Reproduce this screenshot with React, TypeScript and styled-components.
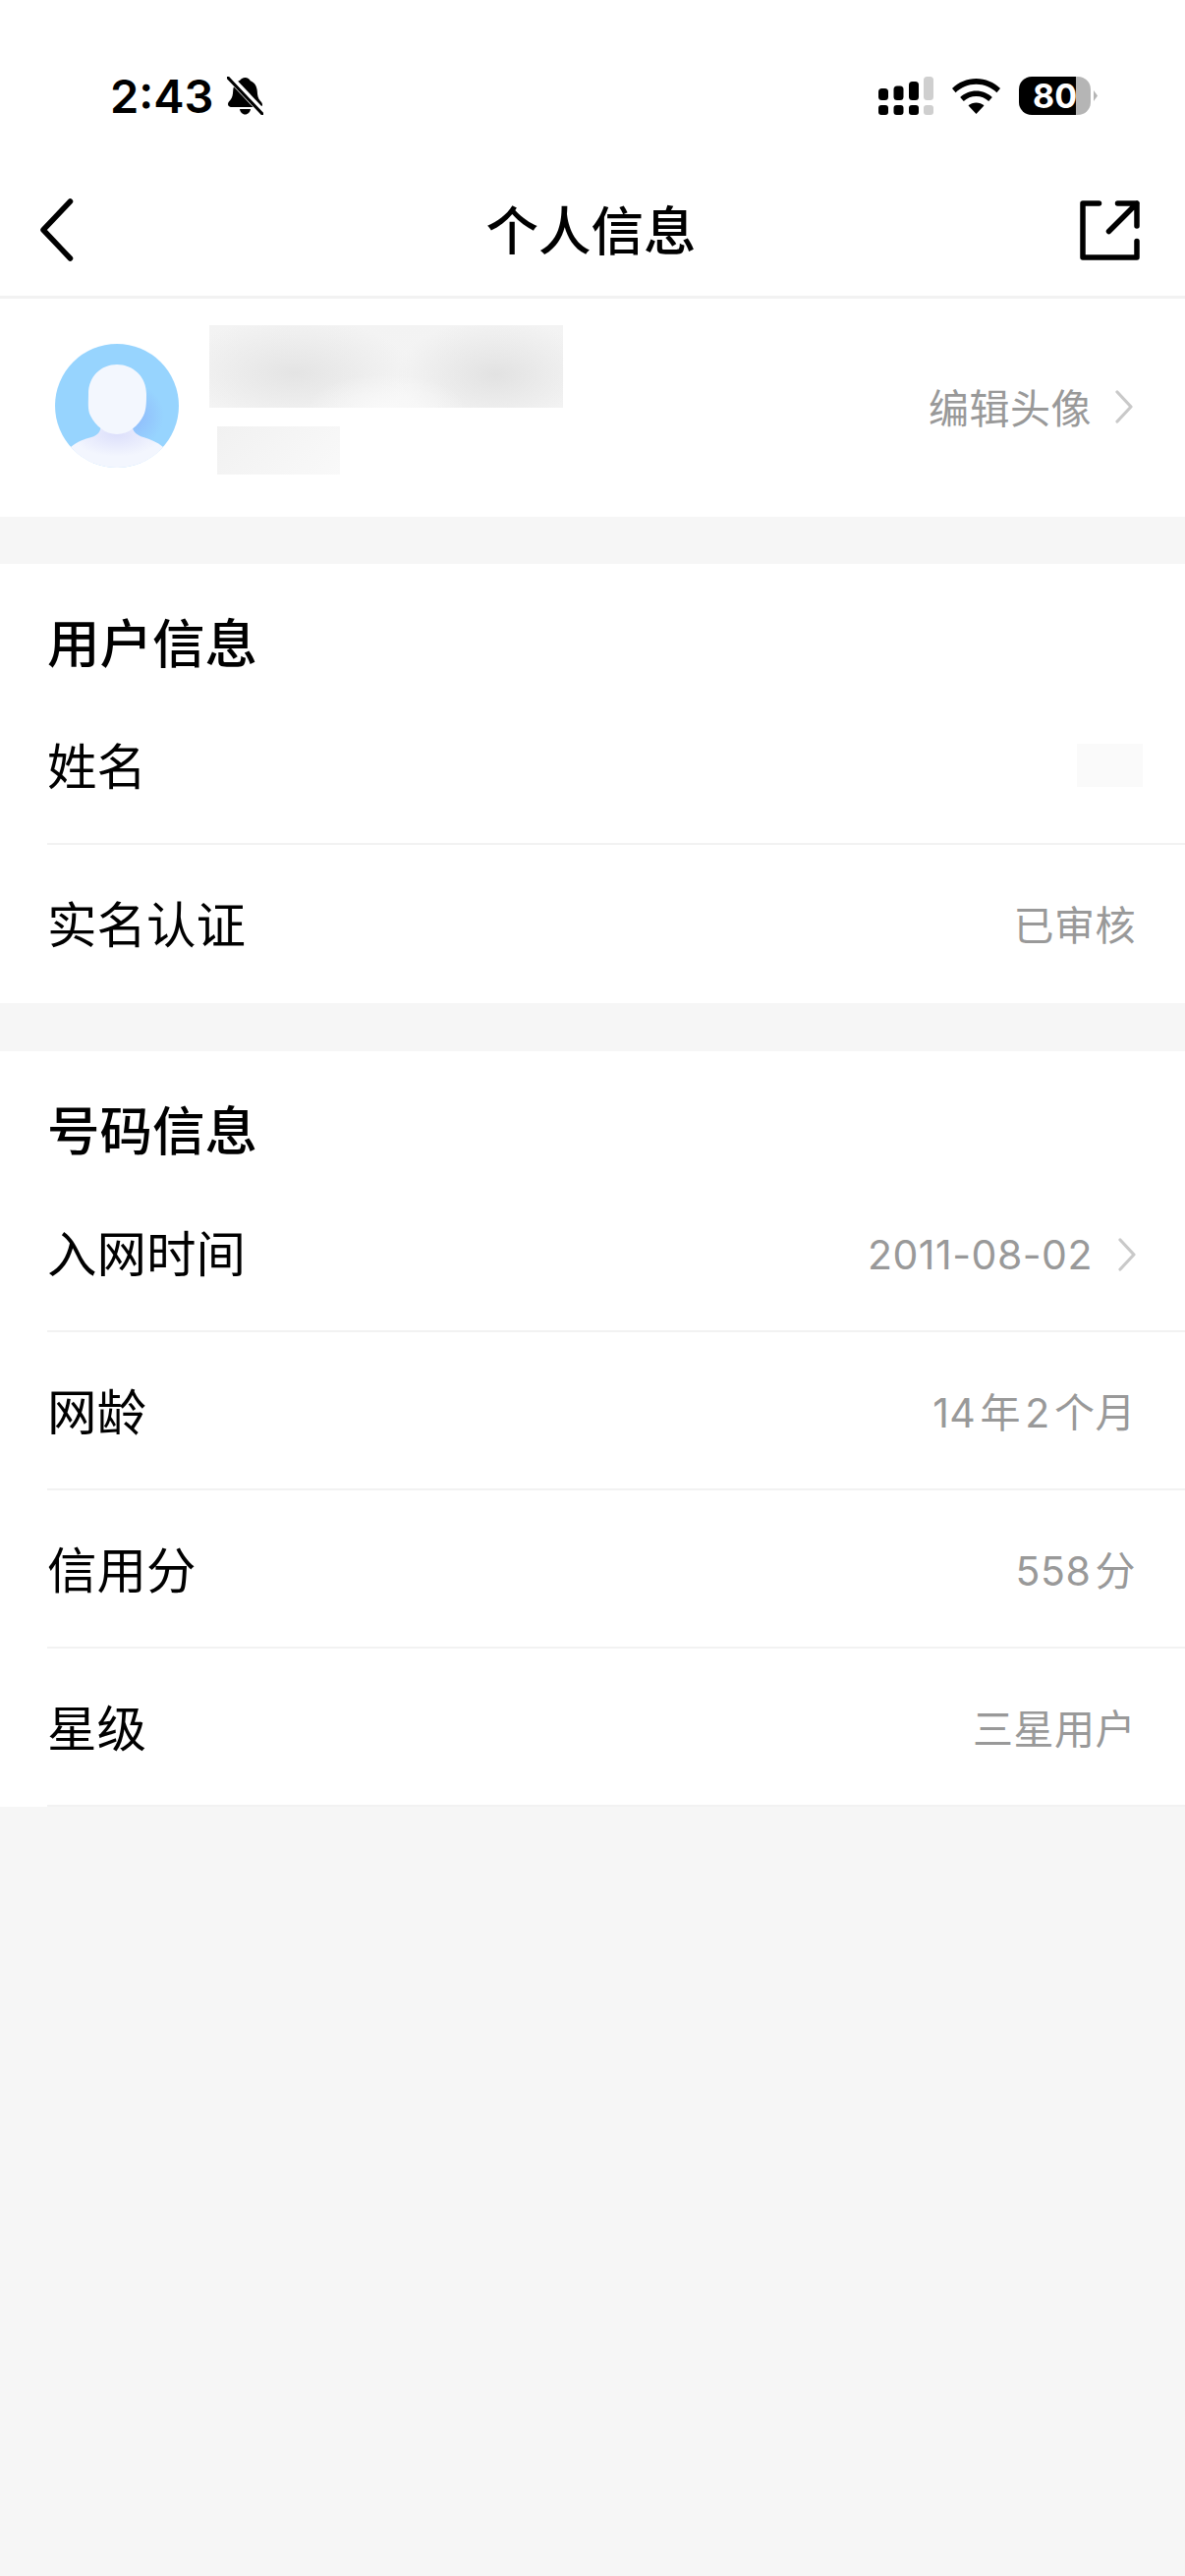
import styled, { createGlobalStyle } from 'styled-components';

const GlobalStyle = createGlobalStyle`
  html, body {
    margin: 0;
    padding: 0;
    background: #f6f6f6;
  }
  * {
    box-sizing: border-box;
  }
`;

const FONT = `Inter, "Noto Sans CJK SC", "Noto Sans", sans-serif`;

const Page = styled.div`
  width: 1206px;
  min-height: 2622px;
  background: #f6f6f6;
  font-family: ${FONT};
  color: #000;
`;

const Header = styled.header`
  background: #fff;
  border-bottom: 3px solid #f2f2f2;
`;

const StatusBar = styled.div`
  height: 167px;
  display: flex;
  align-items: flex-start;
  justify-content: space-between;
  padding: 78px 89px 0 112px;
`;

const StatusGroup = styled.div<{ $gap: number }>`
  display: flex;
  align-items: center;
  height: 39px;
  gap: ${(p) => p.$gap}px;
`;

const Time = styled.span`
  font-size: 47px;
  font-weight: 600;
  line-height: 39px;
  letter-spacing: 0;
`;

const Battery = styled.div`
  width: 73px;
  height: 39px;
  border-radius: 13px;
  overflow: hidden;
  background: linear-gradient(to right, #000 58px, #b5b5b5 58px);
  color: #fff;
  font-size: 34px;
  font-weight: 700;
  line-height: 40px;
  padding-left: 14px;
`;

const BatteryNub = styled.div`
  width: 4px;
  height: 11px;
  margin-left: -16px;
  background: #b5b5b5;
  clip-path: polygon(0 0, 100% 50%, 0 100%);
`;

const Nav = styled.nav`
  height: 134px;
  display: grid;
  grid-template-columns: 1fr auto 1fr;
  align-items: center;
  padding: 0 44px 0 41px;
`;

const NavTitle = styled.h1`
  margin: 0;
  padding-top: 3px;
  font-size: 53.5px;
  font-weight: 500;
  line-height: 72px;
`;

const NavEnd = styled.div`
  display: flex;
  justify-content: flex-end;
  padding-right: 2px;
`;

const ProfileCard = styled.section`
  height: 222px;
  background: #fff;
  display: flex;
  align-items: flex-start;
  padding: 27px 54px 0 56px;
`;

const Avatar = styled.svg`
  width: 126px;
  height: 126px;
  margin-top: 19px;
  flex: none;
`;

const ProfileText = styled.div`
  display: flex;
  flex-direction: column;
  gap: 19px;
  margin-left: 31px;
`;

const BlurName = styled.div`
  width: 360px;
  height: 84px;
  background:
    radial-gradient(ellipse 80px 34px at 50% 100%, #f9f9f9, rgba(249, 249, 249, 0)),
    radial-gradient(ellipse 120px 56px at 24% 58%, #e4e4e4, rgba(228, 228, 228, 0)),
    radial-gradient(ellipse 100px 56px at 81% 60%, #e2e2e2, rgba(226, 226, 226, 0)),
    linear-gradient(#f3f3f3, #f5f5f5);
`;

const BlurTag = styled.div`
  width: 125px;
  height: 49px;
  margin-left: 8px;
  background: linear-gradient(135deg, #f1f1f1, #f9f9f9);
`;

const BlurValue = styled.div`
  width: 67px;
  height: 44px;
  margin-right: -7px;
  background: #fafafa;
`;

const EditLink = styled.div`
  margin-left: auto;
  margin-right: -1px;
  align-self: center;
  margin-bottom: 30px;
  display: flex;
  align-items: center;
  gap: 24px;
`;

const Section = styled.section`
  background: #fff;
  margin-top: 48px;

  & + & {
    margin-top: 49px;
  }
`;

const SectionTitle = styled.h2`
  margin: 0;
  height: 125px;
  padding: 52px 0 0 48px;
  font-size: 53.5px;
  font-weight: 500;
  line-height: 60px;
`;

const Row = styled.div<{ $last?: boolean }>`
  height: 161px;
  margin-left: 48px;
  padding-right: 50px;
  display: flex;
  align-items: center;
  justify-content: space-between;
  border-bottom: 2px solid ${(p) => (p.$last ? 'transparent' : '#f2f2f2')};
`;

const Label = styled.span`
  padding-top: 5px;
  font-size: 50.5px;
  font-weight: 400;
  line-height: 60px;
`;

const Value = styled.span`
  display: flex;
  align-items: center;
  gap: 26px;
  padding-top: 4px;
  font-size: 41px;
  line-height: 56px;
  color: #999;
  letter-spacing: 0.5px;
`;

const Chevron = () => (
  <svg width="18" height="34" viewBox="0 0 18 34" fill="none">
    <path d="M2 2l14 15L2 32" stroke="#c9c9c9" strokeWidth="3.2" strokeLinecap="round" strokeLinejoin="round" />
  </svg>
);

const BellOff = () => (
  <svg width="37" height="39" viewBox="0 0 37 39">
    <path
      fill="#000"
      d="M18.5 1c2.6 0 4.4 1.500 5.300 3.300 4.400 1.600 6.700 5.700 7 10.700.2 3.800.7 7.200 2.900 9.500 1.400 1.500 2.300 2.800 2.300 4 0 1.500-1.100 2.500-2.800 2.500H3.800C2.100 30.500 1 29.500 1 28c0-1.200.9-2.500 2.300-4 2.200-2.300 2.700-5.700 2.900-9.500.3-5 2.600-9.100 7-10.700C14.100 2.500 15.900 1 18.500 1zM13 33h11c-.4 3.100-2.700 5.500-5.500 5.500S13.400 36.100 13 33z"
    />
    <path d="M1 -1L37 37" stroke="#fff" strokeWidth="7" />
    <path d="M1 1L36 38" stroke="#000" strokeWidth="3" strokeLinecap="round" />
  </svg>
);

const Signal = () => (
  <svg width="56" height="39" viewBox="0 0 56 39">
    <rect x="0" y="12" width="10" height="12" rx="3.500" fill="#000" />
    <rect x="15.500" y="9.500" width="10" height="14.500" rx="3.500" fill="#000" />
    <rect x="31" y="5" width="10" height="19" rx="3.500" fill="#000" />
    <rect x="46" y="0" width="10" height="24" rx="3.500" fill="#cfcfcf" />
    <rect x="0" y="29" width="10" height="10" rx="3" fill="#000" />
    <rect x="15.500" y="29" width="10" height="10" rx="3" fill="#000" />
    <rect x="31" y="29" width="10" height="10" rx="3" fill="#000" />
    <rect x="46" y="29" width="10" height="10" rx="3" fill="#cfcfcf" />
  </svg>
);

const Wifi = () => (
  <svg width="49" height="36" viewBox="0 0 49 36">
    <path
      fill="#000"
      d="M24.500 0C34 0 42.500 3.800 49 10l-3.600 4.200C39.900 9 32.600 5.800 24.500 5.800S9.100 9 3.600 14.200L0 10C6.500 3.800 15 0 24.500 0z"
    />
    <path
      fill="#000"
      d="M24.500 12.500c6.300 0 12 2.500 16.300 6.500l-3.600 4.100c-3.300-3.100-7.800-5-12.700-5s-9.400 1.900-12.700 5L8.200 19c4.300-4 10-6.500 16.300-6.500z"
    />
    <path
      fill="#000"
      d="M24.500 24.500c3.100 0 5.900 1.200 8 3.100L24.500 36l-8-8.400c2.100-1.900 4.900-3.100 8-3.100z"
    />
  </svg>
);

const Back = () => (
  <svg width="34" height="64" viewBox="0 0 34 64" fill="none">
    <path d="M30.500 3L3 32l27.500 29" stroke="#000" strokeWidth="5.500" strokeLinecap="round" strokeLinejoin="round" />
  </svg>
);

const Share = () => (
  <svg width="61" height="61" viewBox="0 0 61 61" fill="none">
    <path
      d="M19.500 3H3v55h55V41.500M29.500 31.500L58 3M38.500 3H58v23"
      stroke="#000"
      strokeWidth="5.500"
      strokeLinecap="round"
      strokeLinejoin="round"
    />
  </svg>
);

const AvatarArt = () => (
  <Avatar viewBox="0 0 126 126">
    <defs>
      <radialGradient id="glow" cx="0.62" cy="0.58" r="0.26">
        <stop offset="0" stopColor="#8fb8fb" />
        <stop offset="1" stopColor="#97d4fe" />
      </radialGradient>
      <radialGradient id="neck" cx="0.5" cy="0.25" r="0.5">
        <stop offset="0" stopColor="#dcdffb" />
        <stop offset="1" stopColor="#f3f6fe" />
      </radialGradient>
    </defs>
    <circle cx="63" cy="63" r="63" fill="url(#glow)" />
    <path
      fill="url(#neck)"
      d="M47 80c0 9-3 13-10 15-7 2-14 4-21 10 11 13 28 21 47 21s36-8 47-21c-6-5-13-8-20-10-7-2-12-6-12-15z"
    />
    <path
      fill="#f3f7fe"
      d="M63 21c16 0 30 12 30 30 0 8 0 16-3 22-5 10-15 19-27 19S41 83 36 73c-3-6-2-14-2-22 0-18 13-30 29-30z"
    />
  </Avatar>
);

// hair spaces: the app sets only a small gap between digits and hanzi
const infoRows = [
  { label: '入网时间', value: '2011-08-02', more: true },
  { label: '网龄', value: '14\u200A年\u200A2\u200A个月' },
  { label: '信用分', value: '558\u200A分' },
  { label: '星级', value: '三星用户' },
];

const App = () => (
  <Page>
    <GlobalStyle />
    <Header>
      <StatusBar>
        <StatusGroup $gap={14}>
          <Time>2:43</Time>
          <BellOff />
        </StatusGroup>
        <StatusGroup $gap={19}>
          <Signal />
          <Wifi />
          <Battery>80</Battery>
          <BatteryNub />
        </StatusGroup>
      </StatusBar>
      <Nav>
        <Back />
        <NavTitle>个人信息</NavTitle>
        <NavEnd>
          <Share />
        </NavEnd>
      </Nav>
    </Header>

    <ProfileCard>
      <AvatarArt />
      <ProfileText>
        <BlurName />
        <BlurTag />
      </ProfileText>
      <EditLink>
        <Value>编辑头像</Value>
        <Chevron />
      </EditLink>
    </ProfileCard>

    <Section>
      <SectionTitle>用户信息</SectionTitle>
      <Row>
        <Label>姓名</Label>
        <BlurValue />
      </Row>
      <Row $last>
        <Label>实名认证</Label>
        <Value>已审核</Value>
      </Row>
    </Section>

    <Section>
      <SectionTitle>号码信息</SectionTitle>
      {infoRows.map((row) => (
        <Row key={row.label}>
          <Label>{row.label}</Label>
          <Value>
            {row.value}
            {row.more && <Chevron />}
          </Value>
        </Row>
      ))}
    </Section>
  </Page>
);

export default App;
